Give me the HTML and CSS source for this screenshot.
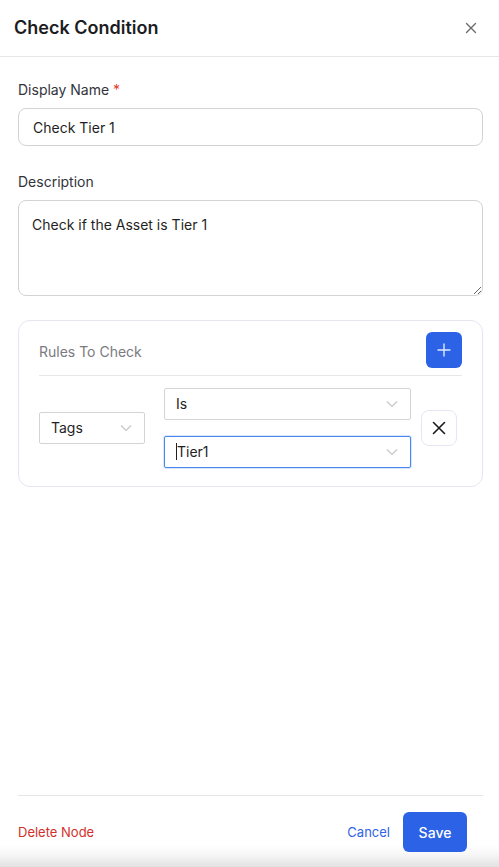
FILE: index.html
```html
<!DOCTYPE html>
<html>
<head>
<meta charset="utf-8">
<link rel="stylesheet" href="styles.css">
</head>
<body>
<div class="panel">
  <header class="header">
    <h1 class="title">Check Condition</h1>
    <button class="close" aria-label="Close">
      <svg width="12" height="12" viewBox="0 0 12 12"><path d="M1.5 1.5L10.5 10.5M10.5 1.5L1.5 10.5" stroke="#6b6b6b" stroke-width="1.4" stroke-linecap="round"/></svg>
    </button>
  </header>
  <main class="content">
    <div class="field">
      <label class="label">Display Name <span class="req">*</span></label>
      <input class="input" type="text" value="Check Tier 1">
    </div>
    <div class="field">
      <label class="label">Description</label>
      <textarea class="textarea">Check if the Asset is Tier 1</textarea>
    </div>
    <section class="card">
      <div class="card-head">
        <span class="card-title">Rules To Check</span>
        <button class="add-btn" aria-label="Add">
          <svg width="14" height="14" viewBox="0 0 14 14"><path d="M7 1V13M1 7H13" stroke="#dfe8ff" stroke-width="1.4" stroke-linecap="round"/></svg>
        </button>
      </div>
      <div class="rule">
        <div class="select select-tags">
          <span class="select-text">Tags</span>
          <svg class="chev" width="12" height="8" viewBox="0 0 12 8"><path d="M1 1.5L6 6.5L11 1.5" fill="none" stroke="#c4c4c4" stroke-width="1.1"/></svg>
        </div>
        <div class="rule-col">
          <div class="select">
            <span class="select-text">Is</span>
            <svg class="chev" width="12" height="8" viewBox="0 0 12 8"><path d="M1 1.5L6 6.5L11 1.5" fill="none" stroke="#c4c4c4" stroke-width="1.1"/></svg>
          </div>
          <div class="select select-focus">
            <span class="select-text"><span class="caret"></span>Tier1</span>
            <svg class="chev" width="12" height="8" viewBox="0 0 12 8"><path d="M1 1.5L6 6.5L11 1.5" fill="none" stroke="#c4c4c4" stroke-width="1.1"/></svg>
          </div>
        </div>
        <button class="remove-btn" aria-label="Remove">
          <svg width="14" height="14" viewBox="0 0 14 14"><path d="M1.5 1.5L12.5 12.5M12.5 1.5L1.5 12.5" stroke="#1a1a1a" stroke-width="1.6" stroke-linecap="round"/></svg>
        </button>
      </div>
    </section>
  </main>
  <footer class="footer">
    <button class="link link-danger">Delete Node</button>
    <div class="actions">
      <button class="link link-primary">Cancel</button>
      <button class="btn-primary">Save</button>
    </div>
  </footer>
</div>
</body>
</html>
```

FILE: styles.css
```css
* { box-sizing: border-box; }
html, body { margin: 0; padding: 0; }
body {
  font-family: Inter, "Noto Sans", "Liberation Sans", sans-serif;
  color: #1f1f24;
  background: #fff;
}
button { font-family: inherit; }

.panel {
  height: 867px;
  display: flex;
  flex-direction: column;
  background: linear-gradient(to bottom, #ffffff 0, #ffffff calc(100% - 22px), #f6f6f6 calc(100% - 12px), #e6e6e6 calc(100% - 3px), #e2e2e2 100%);
}

.header {
  height: 57px;
  display: flex;
  align-items: center;
  justify-content: space-between;
  padding: 0 18px 1px 14px;
  border-bottom: 1px solid #e6e6e6;
}
.title {
  margin: 0;
  font-size: 18px;
  font-weight: 600;
  color: #1c1c1f;
  letter-spacing: 0;
}
.close {
  border: 0;
  background: none;
  padding: 0;
  width: 20px;
  height: 20px;
  display: flex;
  align-items: center;
  justify-content: center;
}

.content {
  flex: 1;
  padding: 23px 16px 0 18px;
  display: flex;
  flex-direction: column;
}
.field {
  display: flex;
  flex-direction: column;
  gap: 8px;
  margin-bottom: 26px;
}
.field:nth-child(2) { margin-bottom: 24px; }
.label {
  font-size: 14px;
  line-height: 20px;
  color: #33333b;
}
.req { color: #e5392f; }
.input {
  height: 38px;
  border: 1px solid #d3d3d6;
  border-radius: 8px;
  padding: 0 14px;
  font: inherit;
  font-size: 14px;
  color: #1f1f24;
  width: 465px;
  outline: none;
}
.textarea {
  height: 96px;
  width: 465px;
  border: 1px solid #d3d3d6;
  border-radius: 8px;
  padding: 14px 13px;
  font: inherit;
  font-size: 14px;
  line-height: 20px;
  color: #1f1f24;
  resize: vertical;
  outline: none;
}

.card {
  width: 465px;
  border: 1px solid #e4e6f2;
  border-radius: 12px;
  padding: 11px 20px 18px 20px;
}
.card-head {
  display: flex;
  align-items: center;
  justify-content: space-between;
  padding-top: 2px;
  padding-bottom: 7px;
  border-bottom: 1px solid #e7e7ea;
  margin-top: -2px;
}
.card-title {
  font-size: 14px;
  color: #7a7a80;
  padding-top: 2px;
}
.add-btn {
  width: 36px;
  height: 36px;
  border: 0;
  border-radius: 6px;
  background: #2c62e6;
  display: flex;
  align-items: center;
  justify-content: center;
  padding: 0;
}

.rule {
  display: flex;
  align-items: center;
  margin-top: 12px;
}
.rule-col {
  display: flex;
  flex-direction: column;
  gap: 16px;
  width: 247px;
  margin-left: 19px;
}
.select {
  height: 32px;
  border: 1px solid #d4d4d6;
  border-radius: 2px;
  display: flex;
  align-items: center;
  justify-content: space-between;
  padding: 0 12px 0 11px;
  background: #fff;
}
.select-tags { width: 106px; }
.select-text {
  font-size: 14px;
  color: #1f1f24;
  display: flex;
  align-items: center;
  margin-top: -1px;
}
.select-focus {
  border-color: #4a86f0;
  box-shadow: 0 0 0 1px #d9e5fb;
}
.caret {
  display: inline-block;
  width: 1px;
  height: 17px;
  background: #1f1f24;
}
.chev { flex: none; }
.remove-btn {
  margin-left: 10px;
  width: 36px;
  height: 36px;
  border: 1px solid #e4e6f2;
  border-radius: 8px;
  background: #fff;
  display: flex;
  align-items: center;
  justify-content: center;
  padding: 0;
}

.footer {
  margin: 0 16px 0 18px;
  border-top: 1px solid #e6e6e6;
  padding: 16px 16px 15px 0;
  display: flex;
  align-items: center;
  justify-content: space-between;
}
.actions {
  display: flex;
  align-items: center;
  gap: 13px;
}
.link {
  border: 0;
  background: none;
  padding: 0;
  font-size: 13px;
}
.link-danger { color: #d2302b; }
.link-primary { color: #2e64e6; }
.btn-primary {
  width: 64px;
  height: 40px;
  border: 0;
  border-radius: 6px;
  background: #2c62e6;
  color: #fff;
  font-size: 14px;
  font-weight: 500;
}
```
